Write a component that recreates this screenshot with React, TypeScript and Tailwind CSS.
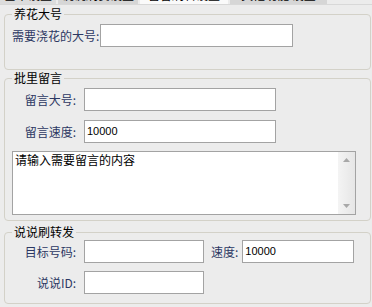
import type { ReactNode } from "react";

const font = "font-['Noto_Sans_CJK_SC','Noto_Sans',sans-serif]";
const numFont = "font-['Liberation_Sans','Noto_Sans_CJK_SC',sans-serif]";

const tabs = [
  { label: "基本设置", className: "w-[56px] bg-[#dcdcdc]" },
  { label: "说说刷赞设置", className: "ml-[2px] w-[80px] bg-[#d6d6d6]" },
  { label: "留言刷转设置", className: "ml-[2px] w-[88px] bg-[#fafafa]" },
  { label: "其他功能 设置", className: "ml-[2px] w-[97px] bg-[#d6d6d6]" },
];

function Group({
  title,
  className,
  children,
}: {
  title: string;
  className: string;
  children: ReactNode;
}) {
  return (
    <fieldset
      className={`ml-[4px] w-[367px] rounded-[4px] border border-[#d3d1c8] ${className}`}
    >
      <legend className="ml-[7px] px-[2px] text-[12px] leading-[16px] text-black">
        {title}
      </legend>
      {children}
    </fieldset>
  );
}

function Field({ value, className }: { value?: string; className: string }) {
  return (
    <div
      className={`flex h-[23px] items-center border border-[#a3a3a3] bg-white pl-[2px] text-[11px] text-black ${numFont} ${className}`}
    >
      {value}
    </div>
  );
}

function Label({ children }: { children: ReactNode }) {
  return (
    <span className="w-[64px] shrink-0 text-right text-[12px] text-[#2c3863]">
      {children}
    </span>
  );
}

export default function App() {
  return (
    <div className={`h-[307px] w-[372px] overflow-hidden bg-[#ececec] ${font}`}>
      <div className="flex h-[5px] overflow-hidden border-b border-[#d8d8d8]">
        {tabs.map((t) => (
          <div
            key={t.label}
            className={`h-[5px] overflow-hidden text-center ${t.className}`}
          >
            <div className="-mt-[13px] text-[12px] leading-[16px] text-black">
              {t.label}
            </div>
          </div>
        ))}
      </div>

      <Group title="养花大号" className="mt-[1px] h-[64px]">
        <div className="mt-[2px] flex items-center pl-[7px]">
          <span className="w-[88px] text-[12px] text-[#2c3863]">需要浇花的大号:</span>
          <Field className="w-[193px]" />
        </div>
      </Group>

      <Group title="批里留言" className="h-[151px]">
        <div className="mt-[2px] flex items-center pl-[7px]">
          <Label>留言大号:</Label>
          <Field className="ml-[8px] w-[192px]" />
        </div>
        <div className="mt-[9px] flex items-center pl-[7px]">
          <Label>留言速度:</Label>
          <Field className="ml-[8px] w-[192px]" value="10000" />
        </div>
        <div className="ml-[7px] mt-[8px] flex h-[64px] w-[344px] border border-[#a3a3a3] bg-white">
          <div className="flex-1 pl-[2px] text-[12px] leading-[16px] text-black">
            请输入需要留言的内容
          </div>
          <div className="flex w-[17px] flex-col items-center justify-between bg-gradient-to-r from-[#f4f4f4] to-[#e6e6e6] py-[6px]">
            <svg width="7" height="4" viewBox="0 0 7 4">
              <path d="M0 4 L3.5 0 L7 4 Z" fill="#a8a8a8" />
            </svg>
            <svg width="7" height="4" viewBox="0 0 7 4">
              <path d="M0 0 L3.5 4 L7 0 Z" fill="#a8a8a8" />
            </svg>
          </div>
        </div>
      </Group>

      <Group title="说说刷转发" className="mt-[3px] h-[80px]">
        <div className="flex items-center pl-[7px]">
          <Label>目标号码:</Label>
          <Field className="ml-[8px] w-[120px]" />
          <span className="ml-[7px] text-[12px] text-[#2c3863]">速度:</span>
          <Field className="ml-[4px] w-[112px]" value="10000" />
        </div>
        <div className="mt-[8px] flex items-center pl-[7px]">
          <Label>说说ID:</Label>
          <Field className="ml-[8px] w-[120px]" />
        </div>
      </Group>
    </div>
  );
}
